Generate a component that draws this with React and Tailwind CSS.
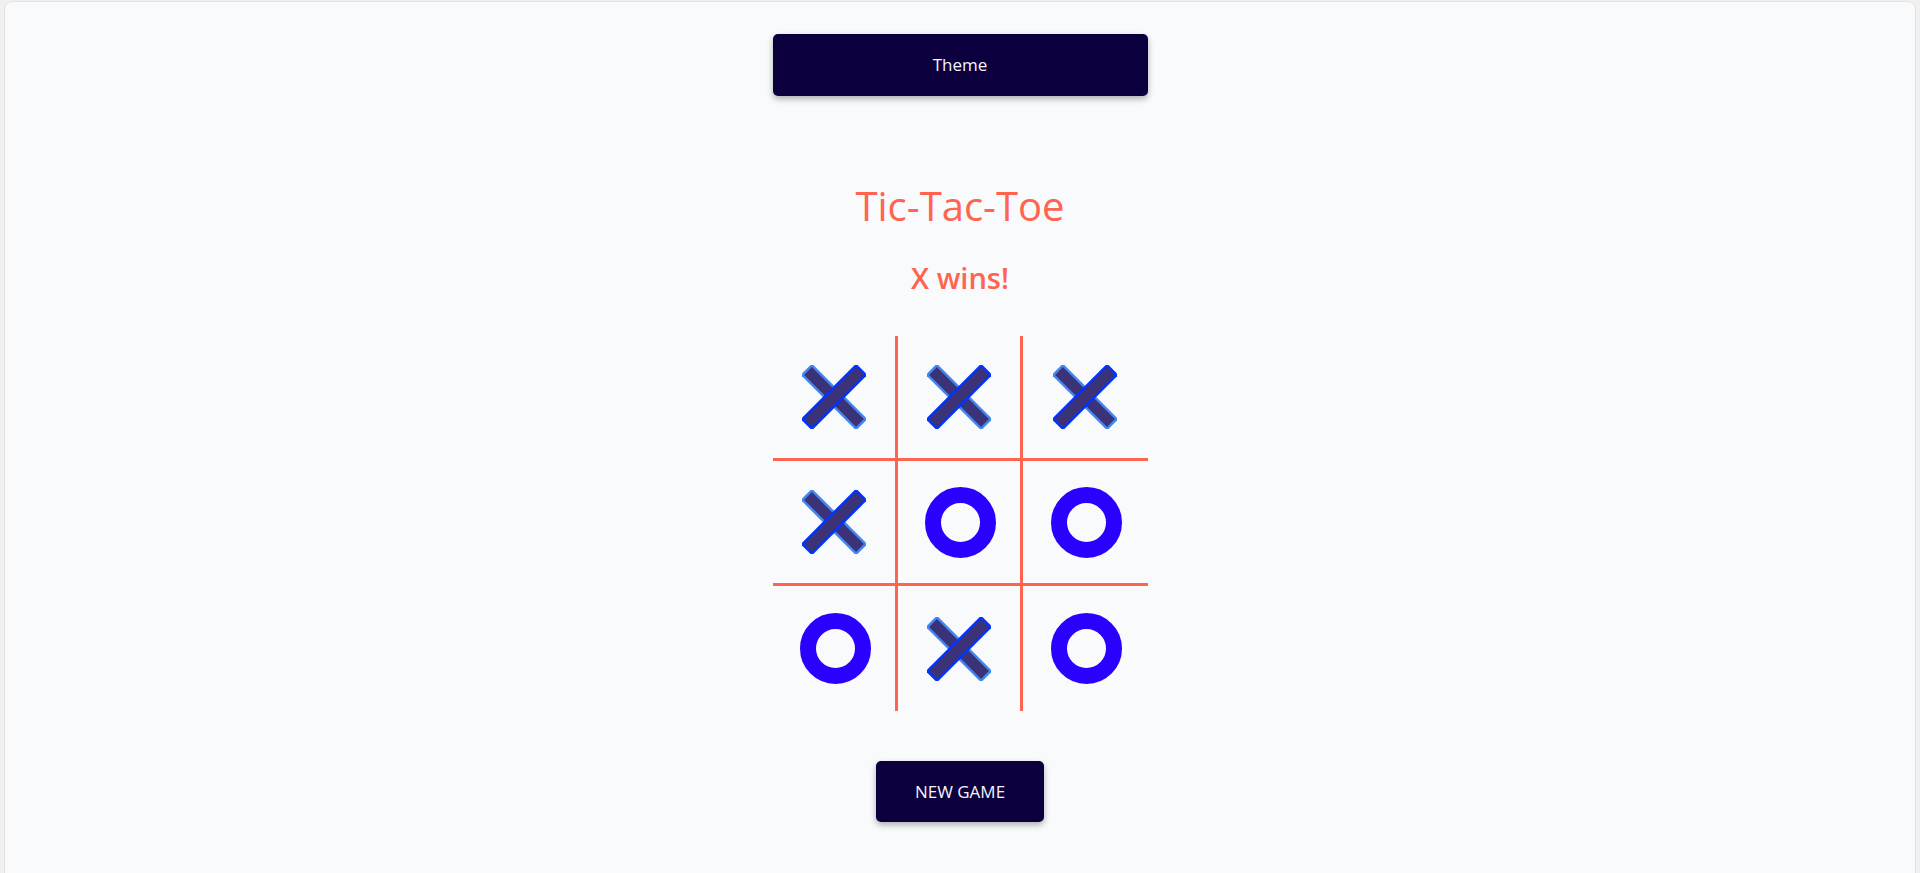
import React, { useState } from 'react';

const board = ['X', 'X', 'X', 'X', 'O', 'O', 'O', 'X', 'O'];

const XMark = () => (
  <svg width="64" height="64" viewBox="0 0 64 64">
    {/* "\" arm */}
    <rect x="-7.25" y="24" width="78.5" height="16" fill="#4287f0" transform="rotate(45 32 32)" />
    <rect x="-4.75" y="26.5" width="73.5" height="11" fill="#3c3277" transform="rotate(45 32 32)" />
    {/* "/" arm */}
    <rect x="-7.25" y="24" width="78.5" height="16" fill="#0033ff" transform="rotate(-45 32 32)" />
    <rect x="-4.75" y="26.5" width="73.5" height="11" fill="#3c3277" transform="rotate(-45 32 32)" />
  </svg>
);

const OMark = () => (
  <div className="ml-[3px] w-[71px] h-[71px] rounded-full border-[16px] border-[#2a00ff]" />
);

const Cell = ({ value, index }) => {
  const col = index % 3;
  const row = Math.floor(index / 3);
  return (
    <div
      className={`h-[125px] flex items-center justify-center
        ${col < 2 ? 'border-r-[3px] border-r-[#ff6450]' : ''}
        ${row < 2 ? 'border-b-[3px] border-b-[#ff6450]' : ''}`}
    >
      {value === 'X' ? <XMark /> : value === 'O' ? <OMark /> : null}
    </div>
  );
};

export default function App() {
  const [cells] = useState(board);

  return (
    <div className="h-screen overflow-hidden bg-[#f0f0f0] px-1 pt-px font-['Open_Sans',sans-serif]">
      <div className="h-[900px] rounded-lg border border-[#e2e2e2] bg-[#f9fafc] flex flex-col items-center">

        {/* THEME */}
        <button className="mt-[32px] w-[375px] h-[62px] rounded-[5px] bg-[#0b003d] text-[#f4f4ff] text-[17px] shadow-[0_3px_6px_rgba(0,0,0,0.3)]">
          Theme
        </button>

        <h1 className="mt-[86px] text-[40px] leading-[48px] text-[#ff6450]">Tic-Tac-Toe</h1>
        <p className="mt-[30px] text-[29px] leading-[36px] font-semibold text-[#ff6450]">X wins!</p>

        {/* BOARD */}
        <div className="mt-[40px] w-[375px] grid grid-cols-3">
          {cells.map((v, i) => (
            <Cell key={i} value={v} index={i} />
          ))}
        </div>

        <button className="mt-[50px] w-[168px] h-[61px] rounded-[5px] bg-[#0b003d] text-[#f4f4ff] text-[17px] shadow-[0_3px_6px_rgba(0,0,0,0.3)]">
          NEW GAME
        </button>
      </div>
    </div>
  );
}
